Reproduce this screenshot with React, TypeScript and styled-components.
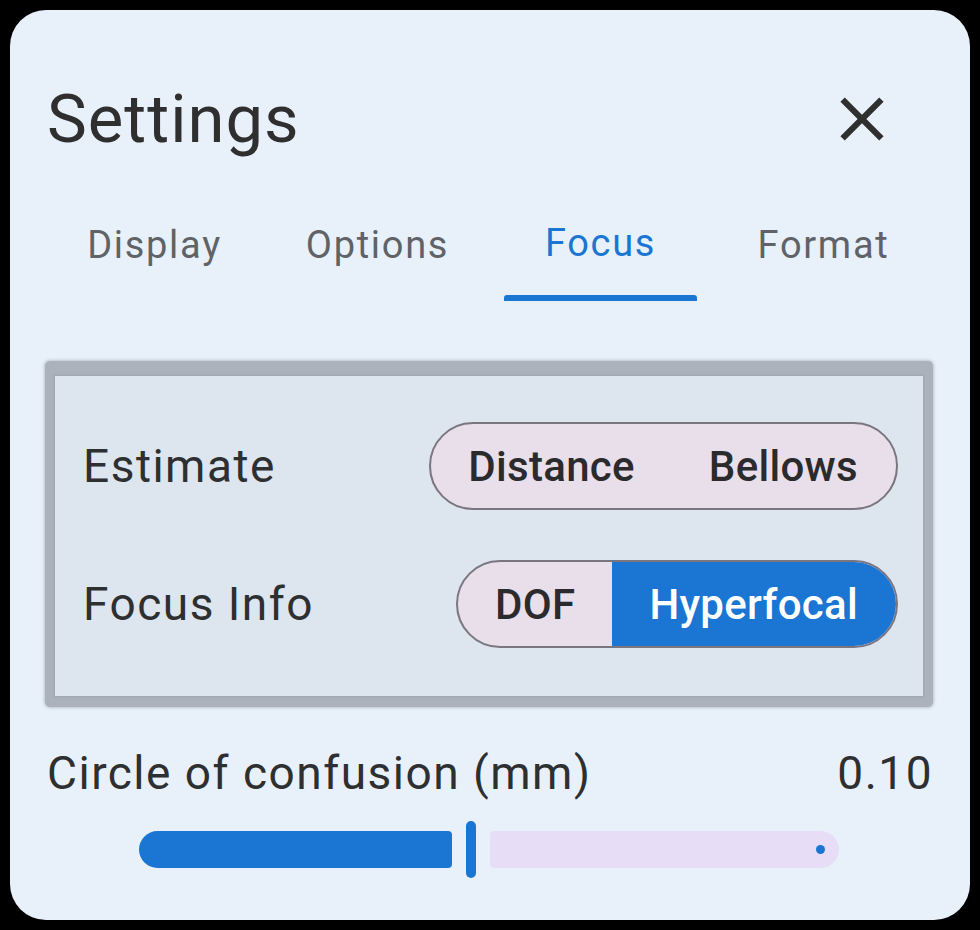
import React from "react";
import styled, { createGlobalStyle } from "styled-components";

const GlobalStyle = createGlobalStyle`
  html, body {
    margin: 0;
    padding: 0;
    background: #000;
  }
  body {
    font-family: Roboto, "Noto Sans", "Liberation Sans", sans-serif;
  }
  * { box-sizing: border-box; }
`;

const Screen = styled.div`
  width: 980px;
  height: 930px;
  padding: 10px;
  background: #000;
`;

const Dialog = styled.div`
  height: 910px;
  width: 960px;
  background: #e8f1fa;
  border-radius: 36px;
  padding: 72px 37px 0 35px;
  display: flex;
  flex-direction: column;
`;

const Header = styled.div`
  display: flex;
  align-items: center;
  justify-content: space-between;
  height: 74px;
  padding-left: 2px;
`;

const Title = styled.h1`
  margin: 0;
  font-size: 67px;
  line-height: 74px;
  font-weight: 400;
  letter-spacing: 1px;
  color: #2f2f30;
`;

const CloseButton = styled.button`
  width: 74px;
  height: 74px;
  margin-right: 34px;
  padding: 0;
  border: none;
  background: transparent;
  color: #2f2f30;
  display: flex;
  align-items: center;
  justify-content: center;
  svg { display: block; }
`;

const TabBar = styled.div`
  margin: 70px -2px 0;
  display: grid;
  grid-template-columns: repeat(4, 1fr);
`;

const Tab = styled.div<{ $active?: boolean }>`
  display: flex;
  flex-direction: column;
  align-items: stretch;
  text-align: center;
  font-size: 38px;
  line-height: 38px;
  letter-spacing: 1.7px;
  color: ${(p) => (p.$active ? "#1a76d2" : "#5f6368")};
`;

const TabLabel = styled.span<{ $active?: boolean }>`
  display: block;
  transform: translateY(${(p) => (p.$active ? "-2px" : "0")});
`;

const Indicator = styled.div<{ $active?: boolean }>`
  margin: 31px 15px 0;
  height: 6px;
  border-radius: 3px 3px 0 0;
  background: ${(p) => (p.$active ? "#1a76d2" : "transparent")};
`;

const Frame = styled.div`
  margin-top: 60px;
  padding: 15px 10px 11px 10px;
  background: #abb2bb;
  border-radius: 5px;
  box-shadow: 0 0 3px 1px rgba(150, 158, 168, 0.55);
`;

const Panel = styled.div`
  background: #dde5ee;
  padding: 46px 25px 48px 28px;
  display: flex;
  flex-direction: column;
  gap: 50px;
  box-shadow: 0 0 2px 1px rgba(150, 158, 168, 0.6);
`;

const Row = styled.div`
  display: flex;
  align-items: center;
  justify-content: space-between;
`;

const Label = styled.span`
  font-size: 46px;
  line-height: 46px;
  letter-spacing: 1.5px;
  color: #2e2f31;
`;

const Pill = styled.div`
  display: inline-flex;
  height: 88px;
  border: 2px solid #7a757f;
  border-radius: 44px;
  overflow: hidden;
  background: #e8dfea;
`;

const Segment = styled.div<{ $selected?: boolean }>`
  display: flex;
  align-items: center;
  padding: 0 37px;
  font-size: 42px;
  font-weight: 500;
  letter-spacing: 0.3px;
  background: ${(p) => (p.$selected ? "#1a76d2" : "transparent")};
  color: ${(p) => (p.$selected ? "#ffffff" : "#2b2a2d")};
  &:last-child { padding-right: 38px; }
`;

const ValueRow = styled.div`
  margin-top: 43px;
  padding-left: 2px;
  display: flex;
  justify-content: space-between;
  font-size: 46px;
  line-height: 46px;
  letter-spacing: 1.5px;
  color: #2e2f31;
`;

const Slider = styled.div`
  margin: 25px auto 0;
  width: 700px;
  height: 57px;
  display: flex;
  align-items: center;
  gap: 14px;
`;

const ActiveTrack = styled.div<{ $w: number }>`
  width: ${(p) => p.$w}px;
  height: 37px;
  background: #1a76d2;
  border-radius: 18.5px 4px 4px 18.5px;
`;

const Handle = styled.div`
  width: 10px;
  height: 57px;
  border-radius: 5px;
  background: #1a76d2;
`;

const InactiveTrack = styled.div`
  position: relative;
  flex: 1;
  height: 37px;
  background: #e8ddf6;
  border-radius: 4px 18.5px 18.5px 4px;
`;

const StopDot = styled.span`
  position: absolute;
  right: 14px;
  top: 50%;
  width: 9px;
  height: 9px;
  margin-top: -4.5px;
  border-radius: 50%;
  background: #1a76d2;
`;

const tabs = ["Display", "Options", "Focus", "Format"];

export default function App() {
  const activeTab = 2;
  return (
    <>
      <GlobalStyle />
      <Screen>
        <Dialog>
          <Header>
            <Title>Settings</Title>
            <CloseButton aria-label="Close">
              <svg width="74" height="74" viewBox="0 0 24 24" fill="currentColor">
                <path d="M19 6.41L17.59 5 12 10.59 6.41 5 5 6.41 10.59 12 5 17.59 6.41 19 12 13.41 17.59 19 19 17.59 13.41 12z" />
              </svg>
            </CloseButton>
          </Header>

          <TabBar>
            {tabs.map((t, i) => (
              <Tab key={t} $active={i === activeTab}>
                <TabLabel $active={i === activeTab}>{t}</TabLabel>
                <Indicator $active={i === activeTab} />
              </Tab>
            ))}
          </TabBar>

          <Frame>
            <Panel>
              <Row>
                <Label>Estimate</Label>
                <Pill>
                  <Segment>Distance</Segment>
                  <Segment>Bellows</Segment>
                </Pill>
              </Row>
              <Row>
                <Label>Focus Info</Label>
                <Pill>
                  <Segment>DOF</Segment>
                  <Segment $selected>Hyperfocal</Segment>
                </Pill>
              </Row>
            </Panel>
          </Frame>

          <ValueRow>
            <span>Circle of confusion (mm)</span>
            <span>0.10</span>
          </ValueRow>

          <Slider>
            <ActiveTrack $w={313} />
            <Handle />
            <InactiveTrack>
              <StopDot />
            </InactiveTrack>
          </Slider>
        </Dialog>
      </Screen>
    </>
  );
}
